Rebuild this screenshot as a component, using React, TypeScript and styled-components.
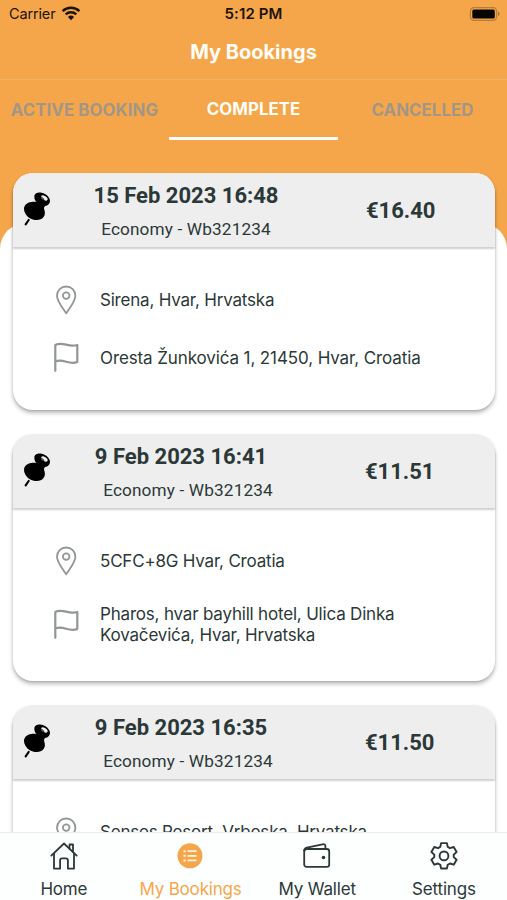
import React from "react";
import styled, { createGlobalStyle } from "styled-components";

const ORANGE = "#f6a64a";
const INK = "#2b3838";

const GlobalStyle = createGlobalStyle`
  * { box-sizing: border-box; }
  body { margin: 0; background: #fff; }
`;

const Screen = styled.div`
  width: 507px;
  height: 900px;
  display: flex;
  flex-direction: column;
  overflow: hidden;
  background: linear-gradient(${ORANGE} 0 300px, #fff 300px);
  font-family: Inter, "Liberation Sans", sans-serif;
  color: ${INK};
`;

const StatusBar = styled.div`
  flex: none;
  height: 27px;
  padding: 0 7px 0 9px;
  display: grid;
  grid-template-columns: 1fr auto 1fr;
  align-items: center;
  color: #1c1408;
  font-size: 15px;
`;

const Carrier = styled.div`
  display: flex;
  align-items: center;
  gap: 6px;
  font-size: 14.5px;
  letter-spacing: -0.15px;
`;

const Clock = styled.div`
  margin-right: 2px;
  font-weight: 600;
  letter-spacing: 0.1px;
`;

const BatterySlot = styled.div`
  display: flex;
  justify-content: flex-end;
`;

const TitleBar = styled.h1`
  flex: none;
  height: 53px;
  margin: 0;
  padding-bottom: 2px;
  display: flex;
  align-items: center;
  justify-content: center;
  border-bottom: 1px solid #f1b069;
  color: #fffdf8;
  font-size: 20px;
  font-weight: 700;
`;

const Tabs = styled.div`
  flex: none;
  height: 61px;
  display: grid;
  grid-template-columns: repeat(3, 169px);
`;

const Tab = styled.div<{ $active?: boolean }>`
  display: flex;
  align-items: center;
  justify-content: center;
  padding-top: ${(p) => (p.$active ? 0 : 2)}px;
  border-bottom: 3px solid ${(p) => (p.$active ? "#fff" : "transparent")};
  border-radius: 1px;
  color: ${(p) => (p.$active ? "#fffdf8" : "#a29686")};
  font-size: 16.8px;
  font-weight: 650;
  letter-spacing: 0.1px;
  margin: 0 0 1px;
  white-space: nowrap;
`;

const Sheet = styled.main`
  flex: 1;
  min-height: 0;
  margin-top: 82px;
  border-radius: 26px 26px 0 0;
  background: #fff;
`;

const BookingList = styled.div`
  height: 659px;
  margin: -50px 12px 0 13px;
  display: flex;
  flex-direction: column;
  gap: 24px;
`;

const Card = styled.article`
  flex: none;
  border-radius: 20px;
  background: #fff;
  box-shadow: 0 3px 4px rgba(0, 0, 0, 0.27), 0 1px 2px rgba(0, 0, 0, 0.1);
`;

const CardHeader = styled.header`
  height: 74px;
  display: grid;
  grid-template-columns: 63px 220px 1fr;
  border-radius: 20px 20px 0 0;
  background: #eee;
  box-shadow: 0 2px 2px rgba(0, 0, 0, 0.19);
  font-family: Roboto, sans-serif;
`;

const PinSlot = styled.div`
  padding: 18px 0 0 10px;
`;

const Trip = styled.div`
  display: flex;
  flex-direction: column;
  align-items: center;
  padding-top: 9px;
`;

const TripDate = styled.div<{ $tracking: number; $inset: number }>`
  margin-right: ${(p) => p.$inset}px;
  font-size: 22px;
  font-weight: 700;
  line-height: 28px;
  letter-spacing: ${(p) => p.$tracking}px;
`;

const TripClass = styled.div<{ $shift: number }>`
  margin: 8px 0 0 ${(p) => p.$shift}px;
  font-size: 17.2px;
  line-height: 23px;
  letter-spacing: 0.15px;
`;

const Price = styled.div<{ $indent: number }>`
  align-self: center;
  padding-left: ${(p) => p.$indent}px;
  font-size: 22px;
  font-weight: 700;
`;

const Stops = styled.div`
  height: 163px;
  padding: 38px 40px 0;
  display: flex;
  flex-direction: column;
  gap: 27px;
`;

const TallStops = styled(Stops)`
  height: 173px;
`;

const Stop = styled.div<{ $min: number }>`
  display: grid;
  grid-template-columns: 27px 1fr;
  column-gap: 20px;
  align-items: center;
  min-height: ${(p) => p.$min}px;
`;

const Address = styled.div<{ $tracking: number }>`
  width: 330px;
  padding-top: 1px;
  font-size: 17px;
  line-height: 20.5px;
  letter-spacing: ${(p) => p.$tracking}px;
`;

const TabBar = styled.nav`
  position: relative;
  flex: none;
  height: 68px;
  display: grid;
  grid-template-columns: repeat(4, 126.7px);
  border-top: 1px solid #ececec;
  background: #fdfefe;
`;

const NavItem = styled.div<{ $active?: boolean }>`
  display: flex;
  flex-direction: column;
  align-items: center;
  padding: 9px 0 0 1px;
  color: ${(p) => (p.$active ? ORANGE : INK)};
  font-size: 17px;
  line-height: 22px;
  letter-spacing: -0.18px;
`;

const NavLabel = styled.span`
  margin-top: 8px;
`;

const WifiIcon = () => (
  <svg width="20" height="15" viewBox="0 0 20 15" fill="none" stroke="#1c1408">
    <path d="M1.6 5.2a12.2 12.2 0 0 1 16.8 0" strokeWidth="2.5" />
    <path d="M4.7 8.4a7.7 7.7 0 0 1 10.6 0" strokeWidth="2.4" />
    <path d="M10 14.2 6.9 11a4.5 4.5 0 0 1 6.2 0z" fill="#1c1408" stroke="none" />
  </svg>
);

const BatteryIcon = () => (
  <svg width="31" height="14" viewBox="0 0 31 14">
    <rect x="1.4" y="0.7" width="26.2" height="12.6" rx="3.6" fill="none" stroke="#b57d38" strokeWidth="1.2" />
    <rect x="3.3" y="2.4" width="22.5" height="9.2" rx="1.5" fill="#080400" />
    <path d="M29 4.8c2 .7 2 3.7 0 4.4z" fill="#a87335" />
  </svg>
);

const PinIcon = () => (
  <svg width="29" height="36" viewBox="0 0 87 108">
    <path d="M17 87 8 100" stroke="#000" strokeWidth="6.5" strokeLinecap="round" />
    <path
      d="M34 17C34 8 43 4 55 5c13 2 25 12 26 24 0 9-6 14-15 16-3 4-4 6-2 11 3 10 2 17-3 23-5 7-13 9-25 8C19 84 4 72 3 54c0-11 9-19 22-21 7-1 12 0 16 0-4-3-7-9-7-16z"
      fill="#000"
    />
    <ellipse cx="64" cy="21" rx="11" ry="6" transform="rotate(32 64 21)" fill="#efefef" />
    <path d="M52 18c6 0 10 5 11 11" stroke="#000" strokeWidth="3" fill="none" />
  </svg>
);

const MarkerIcon = () => (
  <svg width="27" height="30" viewBox="0 0 27 30" fill="none" stroke="#929696" strokeWidth="1.8">
    <path d="M13.2 28.4C9.8 22.6 4 16.5 4 10.7a9.2 9.2 0 0 1 18.4 0c0 5.8-5.8 11.9-9.2 17.7z" strokeLinejoin="round" />
    <circle cx="13.2" cy="10.6" r="3.3" />
  </svg>
);

const FlagIcon = () => (
  <svg width="27" height="31" viewBox="0 0 27 31" fill="none" stroke="#929696" strokeWidth="2.2" strokeLinecap="round" strokeLinejoin="round">
    <path d="M2.300 28.800V3C10-1.300 15 6 24.300 3v17c-8.500 3.500-14-4.200-22-.5" />
  </svg>
);

const HomeIcon = () => (
  <svg width="28" height="28" viewBox="0 0 28 28" fill="none" stroke={INK} strokeWidth="1.8" strokeLinecap="round" strokeLinejoin="round">
    <path d="M1.3 13.6 14 1.5l12.7 12.1" />
    <path d="M4 11.6v15h6.1v-8.3c0-1.3.7-2 2-2h3.8c1.3 0 2 .7 2 2v8.3H24v-15M19.5 6.5V2.5H23V10" />
  </svg>
);

const ListIcon = () => (
  <svg width="28" height="28" viewBox="0 0 28 28">
    <circle cx="13" cy="13.8" r="12.5" fill={ORANGE} />
    <path d="M10.5 9.2h9M10.5 13.8h9M10.5 18.4h9" stroke="#fff4e4" strokeWidth="1.7" />
    <path d="M6.500 9.2h2.2M6.500 13.8h2.2M6.500 18.4h2.2" stroke="#fff4e4" strokeWidth="2" />
  </svg>
);

const WalletIcon = () => (
  <svg width="28" height="28" viewBox="0 0 28 28" fill="none" stroke={INK} strokeWidth="1.8" strokeLinejoin="round">
    <rect x="1.2" y="7" width="25" height="17.8" rx="2.4" />
    <path d="M1.2 9.2c0-2.2.8-3.2 2.7-3.6L19.5 2.3c1.8-.4 2.9.4 2.9 1.9V7" />
    <circle cx="20.5" cy="15.5" r="1.8" fill={INK} stroke="none" />
  </svg>
);

const GearIcon = () => (
  <svg width="28" height="28" viewBox="0 0 28 28" fill="none" stroke={INK} strokeWidth="1.9" strokeLinejoin="round">
    <path d="M11.1 1.1h5.8l.8 3.8 2.3 1.3 3.7-1.2 2.9 5-2.9 2.6v2.5l2.9 2.6-2.9 5-3.7-1.2-2.3 1.3-.8 3.7h-5.8l-.8-3.7L8 21.5l-3.7 1.2-2.9-5 2.9-2.6v-2.5L1.4 10l2.9-5L8 6.2l2.3-1.3z" />
    <circle cx="14" cy="13.9" r="4.4" />
  </svg>
);

type Booking = {
  date: string;
  tracking: number;
  inset: number;
  shift: number;
  price: string;
  priceIndent: number;
  from: string;
  to?: string;
  toTracking?: number;
  tall?: boolean;
};

const bookings: Booking[] = [
  { date: "15 Feb 2023 16:48", tracking: 0, inset: 0, shift: 0, price: "€16.40", priceIndent: 70, from: "Sirena, Hvar, Hrvatska", to: "Oresta Žunkovića 1, 21450, Hvar, Croatia", toTracking: -0.11 },
  { date: "9 Feb 2023 16:41", tracking: 0, inset: 10, shift: 4, price: "€11.51", priceIndent: 69, from: "5CFC+8G Hvar, Croatia", to: "Pharos, hvar bayhill hotel, Ulica Dinka Kovačevića, Hvar, Hrvatska", toTracking: -0.19, tall: true },
  { date: "9 Feb 2023 16:35", tracking: 0, inset: 10, shift: 4, price: "€11.50", priceIndent: 69, from: "Senses Resort, Vrboska, Hrvatska" },
];

const BookingCard = ({ booking }: { booking: Booking }) => {
  const Body = booking.tall ? TallStops : Stops;
  return (
    <Card>
      <CardHeader>
        <PinSlot><PinIcon /></PinSlot>
        <Trip>
          <TripDate $tracking={booking.tracking} $inset={booking.inset}>{booking.date}</TripDate>
          <TripClass $shift={booking.shift}>Economy - Wb321234</TripClass>
        </Trip>
        <Price $indent={booking.priceIndent}>{booking.price}</Price>
      </CardHeader>
      <Body>
        <Stop $min={30}>
          <MarkerIcon />
          <Address $tracking={-0.2}>{booking.from}</Address>
        </Stop>
        {booking.to && (
          <Stop $min={31}>
            <FlagIcon />
            <Address $tracking={booking.toTracking ?? -0.18}>{booking.to}</Address>
          </Stop>
        )}
      </Body>
    </Card>
  );
};

export default function App() {
  return (
    <Screen>
      <GlobalStyle />
      <StatusBar>
        <Carrier>Carrier <WifiIcon /></Carrier>
        <Clock>5:12 PM</Clock>
        <BatterySlot><BatteryIcon /></BatterySlot>
      </StatusBar>
      <TitleBar>My Bookings</TitleBar>
      <Tabs>
        <Tab>ACTIVE BOOKING</Tab>
        <Tab $active>COMPLETE</Tab>
        <Tab>CANCELLED</Tab>
      </Tabs>
      <Sheet>
        <BookingList>
          {bookings.map((b) => <BookingCard key={b.date} booking={b} />)}
        </BookingList>
      </Sheet>
      <TabBar>
        <NavItem><HomeIcon /><NavLabel>Home</NavLabel></NavItem>
        <NavItem $active><ListIcon /><NavLabel>My Bookings</NavLabel></NavItem>
        <NavItem><WalletIcon /><NavLabel>My Wallet</NavLabel></NavItem>
        <NavItem><GearIcon /><NavLabel>Settings</NavLabel></NavItem>
      </TabBar>
    </Screen>
  );
}
